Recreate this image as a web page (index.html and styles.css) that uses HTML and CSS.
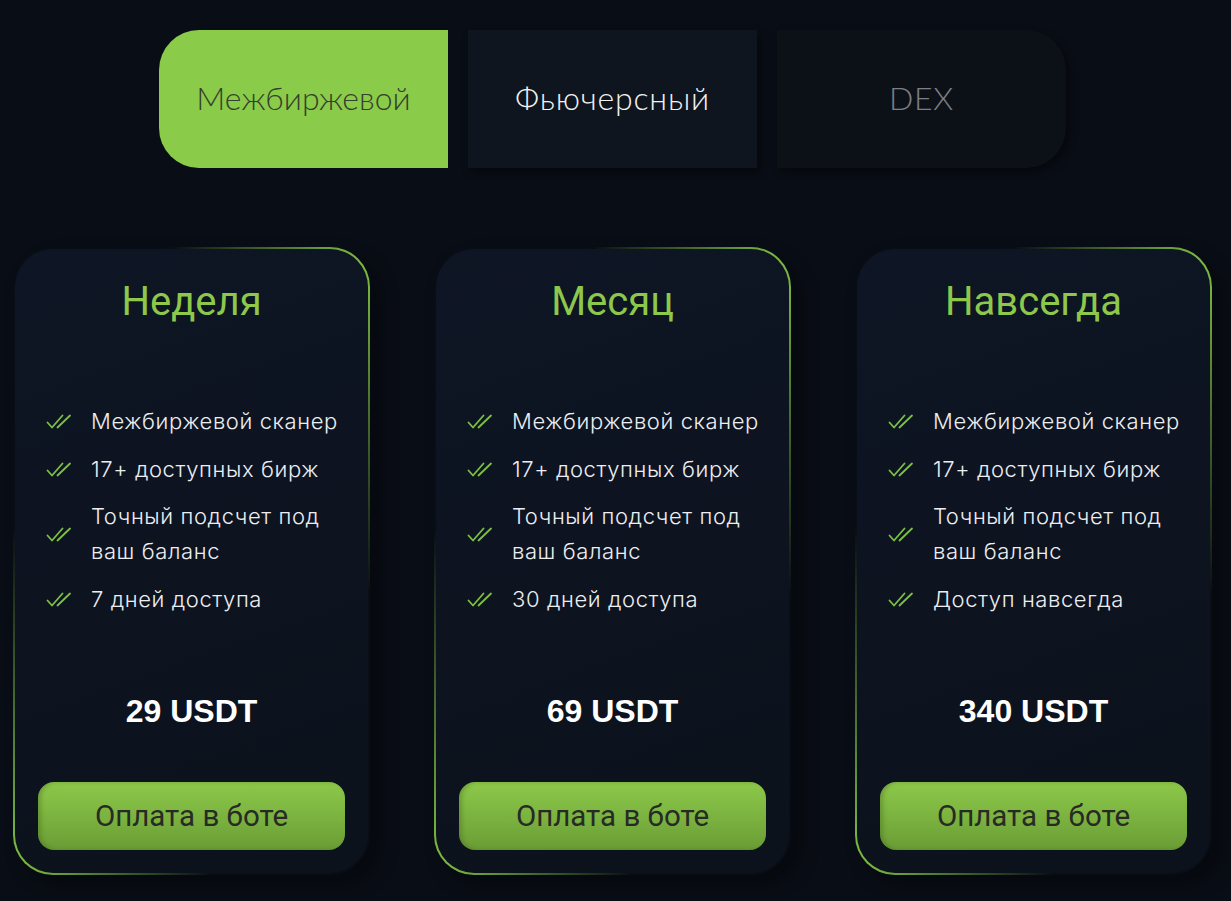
FILE: index.html
```html
<!DOCTYPE html>
<html lang="ru">
<head>
  <meta charset="UTF-8">
  <meta name="viewport" content="width=device-width, initial-scale=1.0">
  <title>Тарифы</title>
  <link rel="stylesheet" href="styles.css">
</head>
<body>
  <div class="page">
    <!-- переключатель типа сканера -->
    <nav class="tabs">
      <button class="tab tab-first active">Межбиржевой</button>
      <button class="tab">Фьючерсный</button>
      <button class="tab tab-last muted">DEX</button>
    </nav>

    <div class="plans">
      <div class="plan">
        <h2 class="plan-title">Неделя</h2>
        <ul class="features">
          <li><svg class="check" viewBox="0 0 26 15"><path d="M1.5 8.5l4.5 5L16.5 1.5M11.5 13.5L24 1.5"/></svg><span>Межбиржевой сканер</span></li>
          <li><svg class="check" viewBox="0 0 26 15"><path d="M1.5 8.5l4.5 5L16.5 1.5M11.5 13.5L24 1.5"/></svg><span>17+ доступных бирж</span></li>
          <li><svg class="check" viewBox="0 0 26 15"><path d="M1.5 8.5l4.5 5L16.5 1.5M11.5 13.5L24 1.5"/></svg><span>Точный подсчет под ваш баланс</span></li>
          <li><svg class="check" viewBox="0 0 26 15"><path d="M1.5 8.5l4.5 5L16.5 1.5M11.5 13.5L24 1.5"/></svg><span>7 дней доступа</span></li>
        </ul>
        <div class="price">29 USDT</div>
        <button class="pay">Оплата в боте</button>
      </div>

      <div class="plan">
        <h2 class="plan-title">Месяц</h2>
        <ul class="features">
          <li><svg class="check" viewBox="0 0 26 15"><path d="M1.5 8.5l4.5 5L16.5 1.5M11.5 13.5L24 1.5"/></svg><span>Межбиржевой сканер</span></li>
          <li><svg class="check" viewBox="0 0 26 15"><path d="M1.5 8.5l4.5 5L16.5 1.5M11.5 13.5L24 1.5"/></svg><span>17+ доступных бирж</span></li>
          <li><svg class="check" viewBox="0 0 26 15"><path d="M1.5 8.5l4.5 5L16.5 1.5M11.5 13.5L24 1.5"/></svg><span>Точный подсчет под ваш баланс</span></li>
          <li><svg class="check" viewBox="0 0 26 15"><path d="M1.5 8.5l4.5 5L16.5 1.5M11.5 13.5L24 1.5"/></svg><span>30 дней доступа</span></li>
        </ul>
        <div class="price">69 USDT</div>
        <button class="pay">Оплата в боте</button>
      </div>

      <div class="plan">
        <h2 class="plan-title">Навсегда</h2>
        <ul class="features">
          <li><svg class="check" viewBox="0 0 26 15"><path d="M1.5 8.5l4.5 5L16.5 1.5M11.5 13.5L24 1.5"/></svg><span>Межбиржевой сканер</span></li>
          <li><svg class="check" viewBox="0 0 26 15"><path d="M1.5 8.5l4.5 5L16.5 1.5M11.5 13.5L24 1.5"/></svg><span>17+ доступных бирж</span></li>
          <li><svg class="check" viewBox="0 0 26 15"><path d="M1.5 8.5l4.5 5L16.5 1.5M11.5 13.5L24 1.5"/></svg><span>Точный подсчет под ваш баланс</span></li>
          <li><svg class="check" viewBox="0 0 26 15"><path d="M1.5 8.5l4.5 5L16.5 1.5M11.5 13.5L24 1.5"/></svg><span>Доступ навсегда</span></li>
        </ul>
        <div class="price">340 USDT</div>
        <button class="pay">Оплата в боте</button>
      </div>
    </div>
  </div>
</body>
</html>
```

FILE: styles.css
```css
body {
  margin: 0;
  background: #090d15;
  font-family: Inter, "Noto Sans", sans-serif;
  color: #e8eaee;
}
.page {
  width: 1231px;
  height: 901px;
  overflow: hidden;
}
.tabs {
  display: flex;
  gap: 20px;
  margin: 30px 0 0 159px;
}
.tab {
  width: 289px;
  height: 138px;
  padding: 0 0 4px;
  border: none;
  background: #0f151e;
  color: #f2f2f2;
  font-family: Lato, sans-serif;
  font-weight: 300;
  font-size: 32px;
  letter-spacing: 0.8px;
  box-shadow: 3px 4px 8px rgba(0, 0, 0, 0.45);
}
.tab-first {
  border-radius: 40px 0 0 40px;
}
.tab-last {
  border-radius: 0 40px 40px 0;
}
.tab.active {
  background: #8bcb4a;
  color: #34402a;
  letter-spacing: 0;
  box-shadow: none;
}
.tab.muted {
  background: #0c1118;
  color: #7c7f84;
}
.plans {
  display: flex;
  gap: 64px;
  margin: 79px 0 0 13px;
}
.plan {
  box-sizing: border-box;
  width: 357px;
  height: 628px;
  border-radius: 40px;
  border: 2px solid transparent;
  background:
    linear-gradient(160deg, #0e1524, #0c121b) padding-box,
    linear-gradient(to bottom left, #86c846 0%, rgba(134, 200, 70, 0) 28%, rgba(134, 200, 70, 0) 72%, #86c846 100%) border-box;
  box-shadow: 10px 10px 18px rgba(0, 0, 0, 0.35);
  display: flex;
  flex-direction: column;
  padding: 29px 23px 23px;
}
.plan-title {
  margin: 0;
  text-align: center;
  font-family: Roboto, sans-serif;
  font-weight: 400;
  font-size: 40px;
  line-height: 48px;
  color: #8dc84b;
}
.features {
  list-style: none;
  margin: 78px 0 0;
  padding: 0 0 0 8px;
  display: flex;
  flex-direction: column;
  gap: 12.5px;
}
.features li {
  display: flex;
  align-items: center;
  font-size: 22px;
  font-weight: 300;
  letter-spacing: 0.6px;
  line-height: 35px;
  color: #eceef2;
}
.check {
  flex: none;
  width: 26px;
  height: 15px;
  margin-right: 19px;
  fill: none;
  stroke: #7cc242;
  stroke-width: 1.8;
  stroke-linecap: round;
  stroke-linejoin: round;
}
.price {
  margin-top: auto;
  text-align: center;
  font-family: "Liberation Sans", Arial, sans-serif;
  font-weight: 700;
  font-size: 32px;
  line-height: 40px;
  color: #ffffff;
}
.pay {
  margin-top: 51px;
  height: 68px;
  border: none;
  border-radius: 16px;
  background: linear-gradient(180deg, #8dc94a, #6a9d36);
  box-shadow: inset 3px 0 4px rgba(60, 90, 30, 0.35);
  font-family: Roboto, sans-serif;
  font-size: 29.5px;
  color: #272a25;
}
```
